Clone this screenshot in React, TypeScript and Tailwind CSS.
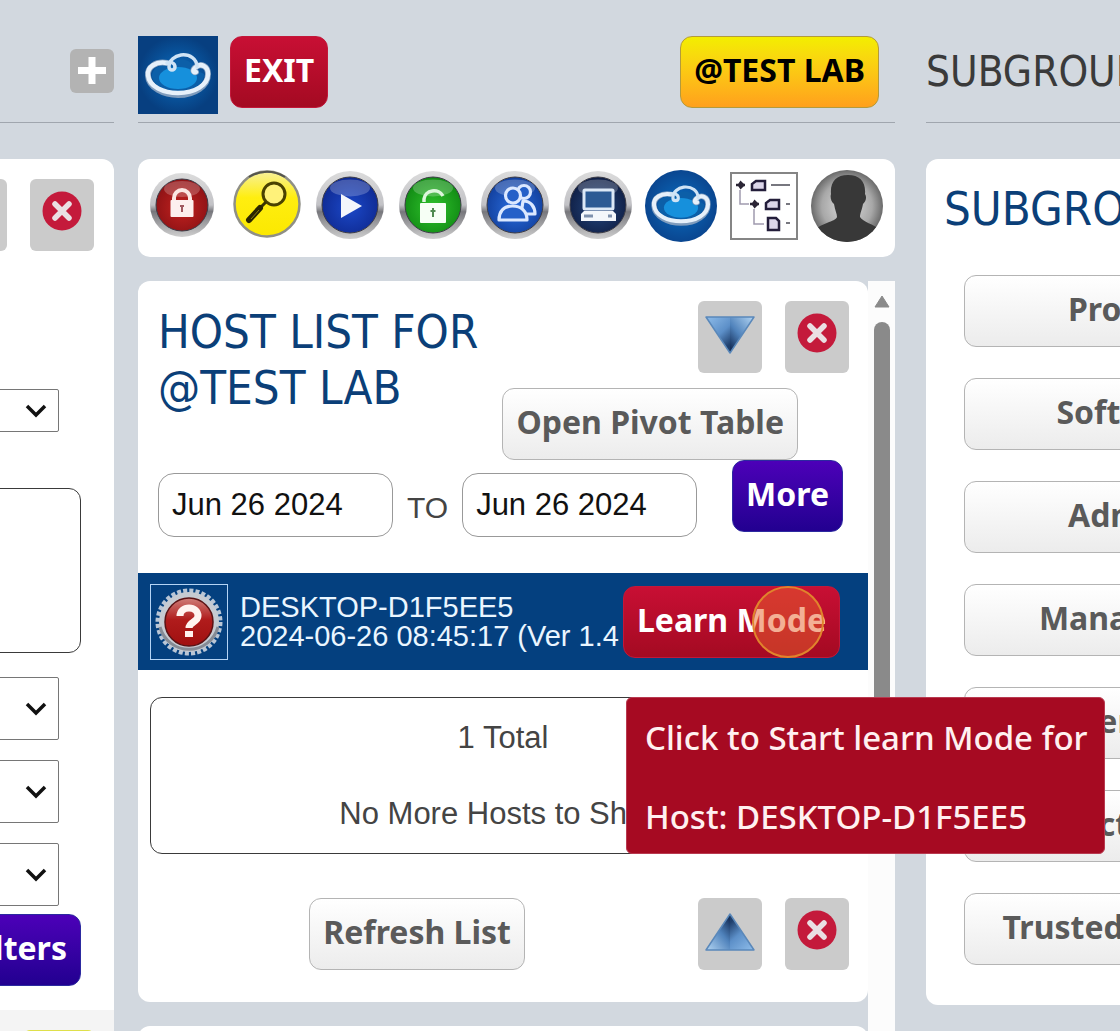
import { ReactNode } from "react";
import clsx from "clsx";

const subgroupItems = [
  "Profiles",
  "Software",
  "Admins",
  "Manage All",
  "Preferences",
  "Action",
  "Trusted Devices",
];

const buttonTones = {
  light:
    "border-[#b4b4b4] bg-linear-to-b from-white to-[#ececec] text-[#5a5a5a]",
  red: "border-[#c2183a] bg-linear-to-b from-[#c80f34] to-[#a40a22] text-white",
  yellow:
    "border-[#b39a3c] bg-linear-to-b from-[#f3ee00] to-[#ffa01c] text-black",
  purple:
    "border-[#2c2aa0] bg-linear-to-b from-[#4c00b8] to-[#220090] text-white",
};

const Button = (props: {
  tone: keyof typeof buttonTones;
  className?: string;
  children: ReactNode;
}) => {
  return (
    <button
      className={clsx(
        "h-[72px] shrink-0 whitespace-nowrap rounded-xl border px-[13px] pb-1 font-['Noto_Sans',sans-serif] text-[32px] font-bold leading-10",
        buttonTones[props.tone],
        props.className,
      )}
    >
      {props.children}
    </button>
  );
};

const IconButton = (props: { label: string; children: ReactNode }) => {
  return (
    <button
      aria-label={props.label}
      className="flex h-[72px] w-16 shrink-0 justify-center rounded-md bg-[#cbcbcb] pt-3"
    >
      {props.children}
    </button>
  );
};

const CloseIcon = () => (
  <svg width="40" height="40" viewBox="0 0 40 40">
    <circle cx="20" cy="20" r="19.5" fill="#c41a3b" />
    <path
      d="M13 13 27 27M27 13 13 27"
      stroke="#eadfe3"
      strokeWidth="5.5"
      strokeLinecap="round"
    />
  </svg>
);

const TriangleIcon = (props: { up?: boolean }) => (
  <svg
    width="52"
    height="44"
    viewBox="0 0 52 44"
    className={props.up ? "rotate-180" : ""}
  >
    <defs>
      <linearGradient id="tri-left" x1="0" y1="0" x2="0.6" y2="1">
        <stop offset="0" stopColor="#8fbdea" />
        <stop offset="0.6" stopColor="#5c8fc8" />
        <stop offset="1" stopColor="#1f3f6c" />
      </linearGradient>
      <linearGradient id="tri-right" x1="1" y1="0" x2="0.2" y2="1">
        <stop offset="0" stopColor="#b4d6f4" />
        <stop offset="0.6" stopColor="#4f82bb" />
        <stop offset="1" stopColor="#16305a" />
      </linearGradient>
    </defs>
    <path d="M2 4H26V40Z" fill="url(#tri-left)" />
    <path d="M50 4H26V40Z" fill="url(#tri-right)" />
    <path
      d="M2 4H50L26 40Z"
      fill="none"
      stroke="#5a88ba"
      strokeWidth="1.5"
      strokeLinejoin="round"
    />
  </svg>
);

const CloudShape = () => (
  <g fill="none" strokeLinecap="round" strokeLinejoin="round">
    <path
      d="M31 29C22 28 13 33 14 41C17 52 29 55 40 55C53 55 66 50 66 38L58 34C54 24 42 20 36 27Z"
      fill="#0c5fa8"
    />
    <ellipse cx="40" cy="42" rx="19" ry="11" fill="#1690dc" />
    <path
      d="M29 27C18 25 9 31 10 40C11 52 26 59 40 59C57 59 70 50 70 38C70 30 63 27 58 31C54 34 55 37 58 36"
      stroke="#7f9cbd"
      strokeWidth="6"
    />
    <path
      d="M29 27C18 25 9 31 10 39C11 51 26 57 40 57C57 57 70 49 70 38C70 30 63 27 58 31C54 34 55 37 58 36"
      stroke="#e6f0fa"
      strokeWidth="4.5"
    />
    <path
      d="M29 27C32 25 37 27 37 31C37 35 31 35 31 31C31 24 37 20 43 19C52 18 59 23 59 31"
      stroke="#cfe3f5"
      strokeWidth="3.5"
    />
  </g>
);

const Logo = () => (
  <svg width="80" height="78" viewBox="0 0 80 78">
    <defs>
      <radialGradient id="logo-bg">
        <stop offset="0" stopColor="#0a6dc0" />
        <stop offset="1" stopColor="#073f80" />
      </radialGradient>
    </defs>
    <rect width="80" height="78" fill="url(#logo-bg)" />
    <CloudShape />
  </svg>
);

// Glossy round badge with a metal rim
const Disc = (props: {
  id: string;
  light: string;
  dark: string;
  r?: number;
  cx?: number;
  children: ReactNode;
}) => {
  let r = props.r ?? 34;
  let shift = (props.cx ?? 36) - 36;
  return (
    <svg width="72" height="72" viewBox="0 0 72 72">
      <defs>
        <linearGradient id={props.id + "-rim"} x1="0" y1="0" x2="0" y2="1">
          <stop offset="0" stopColor="#dcdcdc" />
          <stop offset="0.5" stopColor="#c2c2c6" />
          <stop offset="0.6" stopColor="#77777c" />
          <stop offset="1" stopColor="#cfcfcf" />
        </linearGradient>
        <radialGradient id={props.id} cx="0.5" cy="0.55" r="0.55">
          <stop offset="0" stopColor={props.light} />
          <stop offset="1" stopColor={props.dark} />
        </radialGradient>
      </defs>
      <g transform={`translate(${shift} 0)`}>
        <circle cx="36" cy="35" r={r} fill={`url(#${props.id}-rim)`} />
        <circle
          cx="36"
          cy="35"
          r={r - 6}
          fill={`url(#${props.id})`}
          stroke="#3c3c46"
          strokeWidth="1"
        />
        <ellipse
          cx="36"
          cy={35 - r / 2}
          rx={r - 14}
          ry={r / 4}
          fill="#fff"
          opacity="0.22"
        />
        {props.children}
      </g>
    </svg>
  );
};

const LockedIcon = () => (
  <Disc id="locked" light="#c3221f" dark="#8d1215" r={32}>
    <path
      d="M28 32V28a8 8 0 0 1 16 0v4"
      fill="none"
      stroke="#fbe6e2"
      strokeWidth="4"
    />
    <rect x="24.5" y="30" width="23" height="17" rx="1" fill="#fdf0ee" />
    <path d="M36 35v7M34 36h4" stroke="#a05a60" strokeWidth="2" />
  </Disc>
);

const SearchIcon = () => (
  <svg width="72" height="72" viewBox="0 0 72 72">
    <defs>
      <linearGradient id="search-bg" x1="0" y1="0" x2="0" y2="1">
        <stop offset="0" stopColor="#f7f09a" />
        <stop offset="0.4" stopColor="#ffee10" />
        <stop offset="1" stopColor="#fbe800" />
      </linearGradient>
    </defs>
    <g transform="translate(2 0)">
      <circle
        cx="36"
        cy="34"
        r="32.5"
        fill="url(#search-bg)"
        stroke="#8f8f86"
        strokeWidth="2.5"
      />
      <path
        d="M18 7a33 33 0 0 1 36 0"
        fill="none"
        stroke="#55554c"
        strokeWidth="2"
      />
      <circle
        cx="43"
        cy="24"
        r="11"
        fill="#fff27a"
        stroke="#4a4200"
        strokeWidth="3"
      />
      <path d="M35 32 29 38" stroke="#3a3400" strokeWidth="3" />
      <path
        d="M29 38 18 50"
        stroke="#2a2600"
        strokeWidth="6"
        strokeLinecap="round"
      />
      <path d="M28 40 20 49" stroke="#8a7d10" strokeWidth="1" />
    </g>
  </svg>
);

const PlayIcon = () => (
  <Disc id="play" light="#1b48c8" dark="#0f2a92" cx={38}>
    <path d="M27 24 48 36 27 48Z" fill="#f3f6fb" />
  </Disc>
);

const UnlockedIcon = () => (
  <Disc id="unlocked" light="#2fc32c" dark="#118a14" cx={38}>
    <path
      d="M27 32V29a10 9 0 0 1 19-3"
      fill="none"
      stroke="#ddf6dc"
      strokeWidth="3.5"
    />
    <rect x="23" y="33" width="26" height="20" rx="1" fill="#f6fff5" />
    <path d="M36 38v9M33.5 41h5" stroke="#4f8a50" strokeWidth="2" />
  </Disc>
);

const UsersIcon = () => (
  <Disc id="users" light="#2a6ee0" dark="#123f9c">
    <g fill="#2560c8" stroke="#dbe8ff" strokeWidth="3.2">
      <circle cx="45" cy="22" r="6.5" />
      <path d="M44 31c8 0 12 6 12 13H42z" strokeLinejoin="round" />
      <circle cx="34" cy="25.5" r="7.5" />
      <path d="M20 50c0-9 5-14 13.500-14S48 41 48 50z" strokeLinejoin="round" />
    </g>
  </Disc>
);

const ComputerIcon = () => (
  <Disc id="computer" light="#24477f" dark="#101f45">
    <rect
      x="22"
      y="20"
      width="29"
      height="19"
      rx="1"
      fill="#2c5a94"
      stroke="#dce8f6"
      strokeWidth="3"
    />
    <path d="M22 41H51L54 44V51H19V44Z" fill="#f4f7fb" />
    <path d="M22 46h9M46 46h4" stroke="#7f91ad" strokeWidth="3" />
  </Disc>
);

const CloudIcon = () => (
  <svg width="72" height="72" viewBox="0 0 80 80">
    <defs>
      <radialGradient id="cloud-bg">
        <stop offset="0" stopColor="#0a6dc0" />
        <stop offset="1" stopColor="#0a4690" />
      </radialGradient>
    </defs>
    <circle cx="40" cy="40" r="40" fill="url(#cloud-bg)" />
    <CloudShape />
  </svg>
);

const TreeIcon = () => (
  <svg width="72" height="72" viewBox="0 0 72 72">
    <rect
      x="3"
      y="3"
      width="66"
      height="66"
      fill="#fff"
      stroke="#858585"
      strokeWidth="2"
    />
    <path
      d="M12 20V34H21M26 39V54H36"
      fill="none"
      stroke="#a09aaf"
      strokeWidth="1.5"
    />
    <path d="M43 15H62M58 34H62M58 53H62" stroke="#77777f" strokeWidth="2" />
    <path
      d="M8 15h9M22 34h9"
      stroke="#2b2535"
      strokeWidth="2.5"
    />
    <path
      d="M12.500 10.500 17 15 12.500 19.500 9.500 15ZM26.500 29.500 31 34 26.500 38.500 23.500 34Z"
      fill="#2b2535"
    />
    <g fill="#dcd6ea" stroke="#231d3a" strokeWidth="2.5">
      <path d="M24 20V14l4-3h9v9zM38 39V33l4-3h9v9z" />
      <path d="M40 48h8l3 3v9H40z" />
    </g>
  </svg>
);

const PersonIcon = () => (
  <svg width="72" height="72" viewBox="0 0 72 72">
    <defs>
      <radialGradient id="person-bg">
        <stop offset="0" stopColor="#e0e0e0" />
        <stop offset="0.7" stopColor="#a8a8a8" />
        <stop offset="1" stopColor="#6a6a6a" />
      </radialGradient>
      <clipPath id="person-clip">
        <circle cx="36" cy="36" r="36" />
      </clipPath>
    </defs>
    <circle cx="36" cy="36" r="36" fill="url(#person-bg)" />
    <path
      clipPath="url(#person-clip)"
      d="M37 5C25 5 19 12 20 24C19 27 20 32 23 34C24 40 26 44 26 47C24 52 10 53 4 60V74H70V60C62 54 52 52 49 47C49 43 51 40 52 34C55 31 56 27 54 24C55 12 49 5 37 5Z"
      fill="#383838"
    />
  </svg>
);

const HostStatusIcon = () => (
  <svg width="76" height="74" viewBox="0 0 76 74">
    <defs>
      <linearGradient id="host-bg" x1="0" y1="0" x2="0" y2="1">
        <stop offset="0" stopColor="#cf7d78" />
        <stop offset="0.45" stopColor="#b01c1c" />
        <stop offset="1" stopColor="#a01010" />
      </linearGradient>
    </defs>
    <circle
      cx="38"
      cy="37"
      r="31"
      fill="none"
      stroke="#b9c6d6"
      strokeWidth="5"
      strokeDasharray="4 2.09"
    />
    <circle cx="38" cy="37" r="30" fill="#c6cbd2" />
    <path
      d="M9 42a30 30 0 0 0 58 0"
      fill="none"
      stroke="#858b95"
      strokeWidth="3"
    />
    <circle
      cx="38"
      cy="37"
      r="24"
      fill="url(#host-bg)"
      stroke="#5a1214"
      strokeWidth="1.5"
    />
    <path
      d="M29 31c0-5 4-8 9-8s9 3 9 8c0 6-9 6-9 12"
      fill="none"
      stroke="#fff3f0"
      strokeWidth="7"
    />
    <rect x="34" y="46" width="8" height="6" fill="#fff3f0" />
  </svg>
);

const tools = [
  { label: "Locked", icon: <LockedIcon /> },
  { label: "Search", icon: <SearchIcon /> },
  { label: "Run", icon: <PlayIcon /> },
  { label: "Unlocked", icon: <UnlockedIcon /> },
  { label: "Users", icon: <UsersIcon /> },
  { label: "Computers", icon: <ComputerIcon /> },
  { label: "Cloud", icon: <CloudIcon /> },
  { label: "Tree", icon: <TreeIcon /> },
  { label: "Account", icon: <PersonIcon /> },
];

const FilterSelect = (props: { label: string; className: string }) => {
  return (
    <div className="relative mr-[55px] shrink-0">
      <select
        aria-label={props.label}
        className={clsx(
          "block w-[280px] appearance-none rounded-xs border border-[#767676] bg-white",
          props.className,
        )}
      />
      <svg
        width="22"
        height="14"
        viewBox="0 0 22 14"
        className="pointer-events-none absolute inset-y-0 right-3 my-auto"
      >
        <path d="M2 2 11 11 20 2" fill="none" stroke="#111" strokeWidth="3.5" />
      </svg>
    </div>
  );
};

const FiltersColumn = () => {
  return (
    <aside className="flex w-[114px] shrink-0 flex-col overflow-hidden">
      <header className="flex h-[123px] shrink-0 justify-end border-b border-[#a0a6ae] pt-[49px]">
        <button
          aria-label="Add"
          className="flex size-11 items-center justify-center rounded-md bg-[#b3b3b3]"
        >
          <svg width="30" height="30" viewBox="0 0 30 30">
            <path d="M15 1V28M1 14.500H29" stroke="#fff" strokeWidth="7" />
          </svg>
        </button>
      </header>
      <div className="mt-9 flex grow flex-col items-end rounded-tr-xl bg-white pt-5">
        <div className="mr-5 flex gap-[23px]">
          <IconButton label="Collapse filters">
            <TriangleIcon />
          </IconButton>
          <IconButton label="Close filters">
            <CloseIcon />
          </IconButton>
        </div>
        <div className="mt-[138px]">
          <FilterSelect label="Filter group" className="h-[43px]" />
        </div>
        <textarea
          aria-label="Filter text"
          className="mt-14 mr-[33px] h-[165px] w-[320px] shrink-0 resize-none rounded-xl border border-[#3a3a3a] bg-white"
        />
        <div className="mt-6 flex flex-col gap-5">
          <FilterSelect label="Filter field" className="h-[63px]" />
          <FilterSelect label="Filter operator" className="h-[63px]" />
          <FilterSelect label="Filter order" className="h-[63px]" />
        </div>
        <Button tone="purple" className="mt-2 mr-[33px]">
          Filters
        </Button>
        <div className="mt-6 flex w-full grow justify-end bg-[#f4f4f4] pt-5">
          <div className="mr-5 h-[72px] w-[70px] shrink-0 rounded-md bg-[#dfe04a]" />
        </div>
      </div>
    </aside>
  );
};

const DateInput = (props: { label: string; value: string }) => {
  return (
    <input
      type="text"
      aria-label={props.label}
      defaultValue={props.value}
      className="h-16 w-[235px] rounded-2xl border border-[#999] bg-white px-[13px] text-[31px] text-[#111]"
    />
  );
};

const HostRow = () => {
  return (
    <div className="relative mt-9 flex h-[97px] items-center bg-[#04407f] pl-3 pr-7">
      <div className="shrink-0 border border-[#b5d4f5]">
        <HostStatusIcon />
      </div>
      <p className="ml-3 min-w-0 flex-1 whitespace-nowrap text-[29px] leading-[29px] text-[#eaf6ff]">
        DESKTOP-D1F5EE5
        <br />
        2024-06-26 08:45:17 (Ver 1.4
      </p>
      <div className="relative shrink-0">
        <Button tone="red">Learn Mode</Button>
        {/* click highlight */}
        <span className="pointer-events-none absolute top-0 right-4 size-[72px] rounded-full border-2 border-[#e0842c] bg-[#e8622c]/50" />
      </div>
      <div
        role="tooltip"
        className="absolute top-[124px] left-[488px] z-10 h-[157px] whitespace-nowrap rounded-md border border-[#b83a50] bg-[#a60a22] pr-4 pl-[18px] font-['Noto_Sans',sans-serif] text-[33px] font-medium leading-[79px] text-[#fff0f0]"
      >
        <p>Click to Start learn Mode for</p>
        <p>Host: DESKTOP-D1F5EE5</p>
      </div>
    </div>
  );
};

const HostPanel = () => {
  return (
    <section className="rounded-xl bg-white pt-5">
      <div className="flex justify-between pr-[19px] pl-5">
        <h2 className="pt-[3px] font-['DejaVu_Sans_Condensed','Noto_Sans',sans-serif] text-[47px] leading-14 text-[#0b3f78]">
          HOST LIST FOR
          <br />
          @TEST LAB
        </h2>
        <div className="flex flex-col items-end gap-[15px]">
          <div className="flex gap-[23px]">
            <IconButton label="Move list down">
              <TriangleIcon />
            </IconButton>
            <IconButton label="Close list">
              <CloseIcon />
            </IconButton>
          </div>
          <Button tone="light" className="mr-[51px]">
            Open Pivot Table
          </Button>
        </div>
      </div>
      <div className="flex items-end justify-between pr-[25px] pl-5">
        <div className="flex items-center gap-[14px] text-[30px]">
          <DateInput label="From" value="Jun 26 2024" />
          <span className="pt-1 text-[#444]">TO</span>
          <DateInput label="To" value="Jun 26 2024" />
        </div>
        <Button tone="purple" className="mb-[5px]">
          More
        </Button>
      </div>
      <HostRow />
      <div className="mx-3 mt-[27px] flex h-[157px] flex-col justify-center gap-9 rounded-xl border border-[#3a3a3a] text-center text-[31px] leading-10 text-[#444]">
        <p>1 Total</p>
        <p>No More Hosts to Show</p>
      </div>
      <div className="mt-11 flex items-center gap-[23px] pr-[19px] pb-8">
        <div className="flex flex-1 justify-end pr-[150px]">
          <Button tone="light">Refresh List</Button>
        </div>
        <IconButton label="Move list up">
          <TriangleIcon up />
        </IconButton>
        <IconButton label="Close list footer">
          <CloseIcon />
        </IconButton>
      </div>
    </section>
  );
};

const HostsColumn = () => {
  return (
    <main className="ml-6 flex min-w-0 flex-1 flex-col">
      <header className="flex h-[123px] shrink-0 items-start gap-3 border-b border-[#a0a6ae] pt-9 pr-4">
        <Logo />
        <Button tone="red">EXIT</Button>
        <Button tone="yellow" className="ml-auto">
          @TEST LAB
        </Button>
      </header>
      <nav className="mt-9 flex h-[98px] shrink-0 justify-between rounded-xl bg-white pt-[11px] pr-3 pl-2">
        {tools.map((tool) => (
          <button key={tool.label} aria-label={tool.label} className="size-[72px]">
            {tool.icon}
          </button>
        ))}
      </nav>
      <div className="mt-6 flex min-h-0 flex-1">
        <div className="flex min-w-0 flex-1 flex-col gap-6">
          <HostPanel />
          <section className="h-24 shrink-0 rounded-xl bg-white" />
        </div>
        <div className="flex w-[27px] shrink-0 flex-col items-center bg-[#fcfcfc] pt-[14px]">
          <svg width="16" height="13" viewBox="0 0 16 13">
            <path
              d="M8 1 15 12H1Z"
              fill="#8a8a8a"
              stroke="#8a8a8a"
              strokeLinejoin="round"
            />
          </svg>
          <div className="mt-[14px] h-[500px] w-4 rounded-full bg-[#8a8a8a]" />
        </div>
      </div>
    </main>
  );
};

const SubgroupsColumn = () => {
  return (
    <aside className="ml-[31px] w-[194px] shrink-0">
      <header className="h-[123px] border-b border-[#a0a6ae] pt-[44px]">
        <h1 className="font-['DejaVu_Sans_Condensed','Noto_Sans',sans-serif] text-[42px] leading-14 text-[#3a3a3a]">
          SUBGROUPS
        </h1>
      </header>
      <section className="mt-9 w-[404px] rounded-xl bg-white px-[38px] pt-[22px] pb-10">
        <h2 className="-ml-5 font-['DejaVu_Sans_Condensed','Noto_Sans',sans-serif] text-[47px] leading-14 text-[#0b3f78]">
          SUBGROUPS
        </h2>
        <div className="mt-[38px] flex flex-col gap-[31px]">
          {subgroupItems.map((item) => (
            <Button key={item} tone="light">
              {item}
            </Button>
          ))}
        </div>
      </section>
    </aside>
  );
};

export default function App() {
  return (
    <div className="flex h-screen overflow-hidden bg-[#d2d8df] font-['Liberation_Sans',Arial,sans-serif]">
      <FiltersColumn />
      <HostsColumn />
      <SubgroupsColumn />
    </div>
  );
}
